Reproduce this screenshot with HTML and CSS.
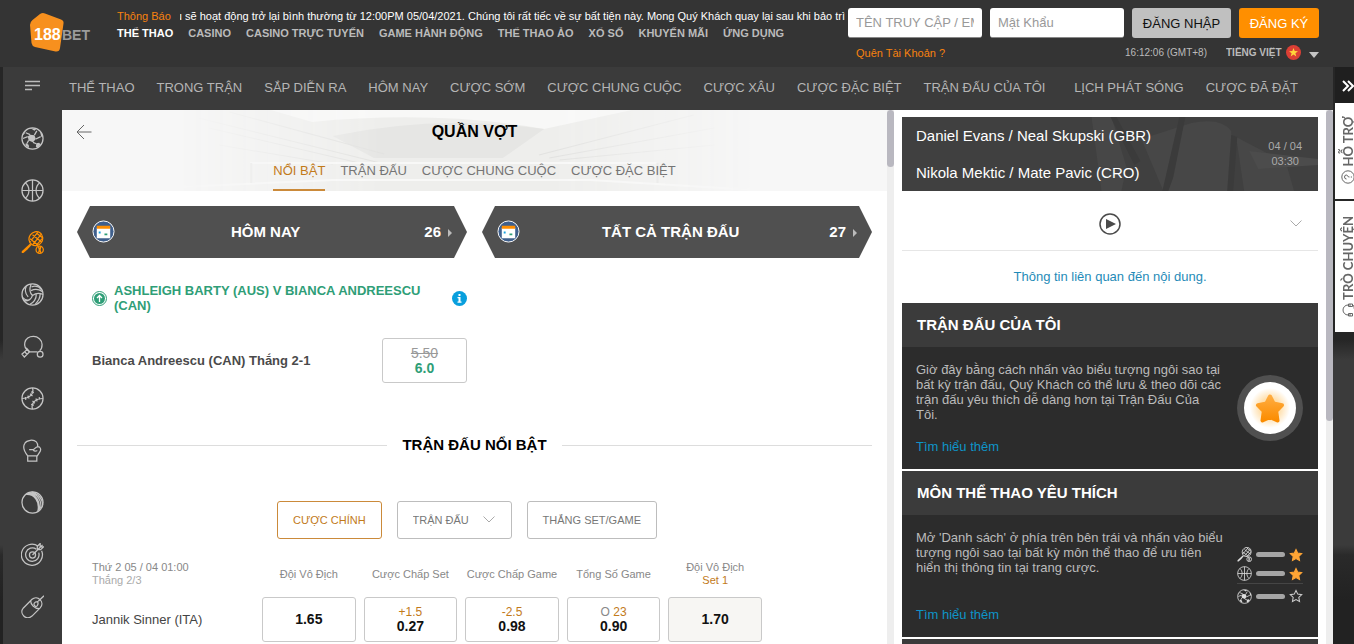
FILE: index.html
```html
<!DOCTYPE html>
<html lang="vi">

<head>
    <meta charset="UTF-8">
    <meta name="viewport" content="width=device-width, initial-scale=1.0">
    <title>188BET - Quần vợt</title>
    <link rel="stylesheet" href="styles.css">
</head>

<body>

    <!-- Biểu tượng dùng chung -->
    <svg class="sprite" aria-hidden="true">
        <symbol id="i-soccer" viewBox="0 0 24 24">
            <circle cx="12" cy="12" r="11" />
            <path class="patch" d="M9.500 8l4.500.5 1.500 4-3 3.500-4.500-2-1-4zM10 1.300l6 .7-2 2zM1.500 9.500L4 6.500l1.500-3L2.500 7zM20 5l1 5 1.800 1-.8-4zM5 17l3 1.500.5 3.500-4-3zM16 17l3-.5 1.500 2-3 3-2-1z" />
            <path d="M9.500 8L5 6M14 8.500L16.500 4M15.500 12.500l5-2.500M12.500 16l3.500 1.500M8 14l-2 3.500M7 10l-5 2" />
        </symbol>
        <symbol id="i-basket" viewBox="0 0 24 24">
            <circle cx="12" cy="12" r="11" />
            <path d="M12 1v22M1 12h22M4.500 4c5 4 5 12 0 16M19.500 4c-5 4-5 12 0 16" />
        </symbol>
        <symbol id="i-tennis" viewBox="0 0 24 24">
            <ellipse cx="15.500" cy="8" rx="7" ry="7.500" transform="rotate(35 15.500 8)" />
            <path d="M9.500 8l8 6.500M12 4l9.500 7.500M16 2l6.500 5M9.500 11l8-9.500M12 14.500L21.500 3M16 15l6-7" />
            <path class="patch" d="M9.500 13l1.500 1.500-4 4.500-4.500 4H.8V21z" />
            <circle cx="19.500" cy="19.500" r="3.800" />
            <path d="M18.200 16.200c1 2 1 5 0 6.600M20.800 16.200c-1 2-1 5 0 6.600" />
        </symbol>
        <symbol id="i-volley" viewBox="0 0 24 24">
            <circle cx="12" cy="12" r="11" />
            <path d="M12 13C9 10 9 5 10.500 1.200M12 13c4-3 8-2.500 11-1M12 13c-1 4-5 6.500-9 5.500M7.500 14.500C4 11 4 6 5.500 3.500M10 16.500c-3 3-6 1-8.500-1.500M11 4c4-1.500 8 0 10.500 3M10.500 8c4-2 8-1.500 12 1M16 11.500c0 5-3 9-7 11M20 11.500c0 4-2 7.500-5 10.500" />
        </symbol>
        <symbol id="i-pingpong" viewBox="0 0 24 24">
            <path d="M17 17.500H8.500C5 15 3 12 4 8c1-4 4.500-6.500 9-6.500S22 5 22 10c0 3-.5 5-2.500 6.500M5.500 13.500L9.500 18M6.500 15L1 20l2.500 3L9 17.500M4 17.500l2.500 3" />
            <circle cx="20" cy="20" r="3" />
        </symbol>
        <symbol id="i-baseball" viewBox="0 0 24 24">
            <circle cx="12" cy="12" r="11" />
            <path d="M12 1c2 6-3 11-11 11M12 23c-2-6 3-11 11-11M13.500 6l-3-1M12 9.500L9.500 7M8.500 12L7 9M5 13.500L4.500 10.500M10.500 18l3 1M12 14.500l2.500 2.500M15.500 12l1.500 3M19 10.500l.5 3" />
        </symbol>
        <symbol id="i-boxing" viewBox="0 0 24 24">
            <path d="M7 17.500c-4-5-5-10-3-13 2-3.500 9-4.500 12-1.500 1.500 1.500 1.500 3 1.500 5 3 0 3.500 3 2.500 5l-3 4.500zM7 17.500h9.500V23H7zM8.500 11h4c2 0 2-2.500 5-3M12.500 11c1 1.500 3 2 4.500 1" />
        </symbol>
        <symbol id="i-cricket" viewBox="0 0 24 24">
            <circle cx="12" cy="12" r="11" />
            <path d="M5.500 3.500C14 3 20 11 17.500 21.500M8.500 2c8 0 13.500 8 12 16M7 2.500c8 0 13.500 8 12 17.500M11 1.200c7 1 12 8 11.500 13.500" />
        </symbol>
        <symbol id="i-darts" viewBox="0 0 24 24">
            <path d="M18 3.500A11 11 0 1 0 21.500 8M16 6.500A7 7 0 1 0 18.500 10" />
            <circle cx="12" cy="12.500" r="3.200" />
            <path d="M12 12.500L20 4.500M17 7V3.500l3-3v3.500h3.500l-3 3zM18.500 6l4-4" />
        </symbol>
        <symbol id="i-esports" viewBox="0 0 24 24">
            <path d="M2.500 13.500l9-9c5.500-5 14 3 8.500 9l-8.500 8.500c-6 5-14-2.500-9-8.500zM10 5.800c0 4 4 8.500 9 8.500M18 6.500L24 .8" />
            <path d="M17.500 7c-4 0-5 3-3 4.500s4-1.500 3-4.500z" />
        </symbol>
        <symbol id="i-star" viewBox="0 0 24 24">
            <path d="M12 2.500l3 6.300 6.800.9-5 4.800 1.300 6.900L12 18.100l-6.100 3.300 1.300-6.900-5-4.800 6.800-.9z" />
        </symbol>
        <symbol id="i-chevron" viewBox="0 0 12 7">
            <path d="M.5.5L6 6 11.500.5" />
        </symbol>
        <symbol id="i-calendar" viewBox="0 0 24 24">
            <circle cx="12" cy="12" r="11" fill="#3f5f8c" stroke="#fff" />
            <path fill="#fff" d="M5 8h14v11H5z" />
            <path fill="#ff8e00" d="M5 6h14v3H5z" />
            <path fill="#1ba3e0" d="M7 12h2v2H7z" />
            <path fill="#2f9e77" d="M13 14h3v2h-3z" />
        </symbol>
    </svg>

    <header class="topbar">
        <a class="logo" href="#" aria-label="188BET">
            <svg width="66" height="44" viewBox="0 0 66 44">
                <path fill="#f7901e" d="M12 2Q14.500.5 17 1.500l16 6q3 1 2.500 4L32 36q-.5 4-4.500 3.500L7 35q-3-1-3.500-4L2 13q0-3 2.500-5z" />
                <text class="logo-num" x="6" y="28">188</text>
                <text class="logo-bet" x="34" y="28">BET</text>
            </svg>
        </a>

        <div class="top-main">
            <div class="notice">
                <span class="notice-label">Thông Báo</span>
                <div class="notice-window">
                    <p class="notice-text">u sẽ hoạt động trở lại bình thường từ 12:00PM 05/04/2021. Chúng tôi rất tiếc về sự bất tiện này. Mong Quý Khách quay lại sau khi bảo trì hoàn tất.</p>
                </div>
            </div>
            <nav class="top-menu">
                <a class="active" href="#">THỂ THAO</a>
                <a href="#">CASINO</a>
                <a href="#">CASINO TRỰC TUYẾN</a>
                <a href="#">GAME HÀNH ĐỘNG</a>
                <a href="#">THỂ THAO ẢO</a>
                <a href="#">XỔ SỐ</a>
                <a href="#">KHUYẾN MÃI</a>
                <a href="#">ỨNG DỤNG</a>
            </nav>
        </div>

        <form class="login">
            <div class="login-row">
                <input type="text" aria-label="Tên truy cập" placeholder="TÊN TRUY CẬP / EMAIL">
                <input type="password" aria-label="Mật khẩu" placeholder="Mật Khẩu">
                <button class="btn-login" type="button">ĐĂNG NHẬP</button>
                <button class="btn-register" type="button">ĐĂNG KÝ</button>
            </div>
            <div class="login-info">
                <a class="forgot" href="#">Quên Tài Khoản ?</a>
                <span class="clock">16:12:06 (GMT+8)</span>
                <label class="language">
                    <select aria-label="Ngôn ngữ">
                        <option>TIẾNG VIỆT</option>
                    </select>
                    <svg width="15" height="15" viewBox="0 0 15 15">
                        <circle cx="7.500" cy="7.500" r="7.500" fill="#dc3f35" />
                        <path fill="#ffd43b" d="M7.500 3l1.200 3.100 3.300.1-2.600 2 .9 3.200-2.800-1.800-2.800 1.800.9-3.200-2.600-2 3.300-.1z" />
                    </svg>
                    <svg width="10" height="6" viewBox="0 0 10 6">
                        <path fill="#c4c4c4" d="M0 0h10L5 6z" />
                    </svg>
                </label>
            </div>
        </form>
    </header>

    <div class="page">
        <div class="app">
            <nav class="sport-nav">
                <button class="menu-btn" type="button" aria-label="Danh sách">
                    <svg width="15" height="12" viewBox="0 0 15 12">
                        <path d="M0 1.500h15M0 5.500h15M0 9.500h7" />
                    </svg>
                </button>
                <a href="#">THỂ THAO</a>
                <a href="#">TRONG TRẬN</a>
                <a href="#">SẮP DIỄN RA</a>
                <a href="#">HÔM NAY</a>
                <a href="#">CƯỢC SỚM</a>
                <a href="#">CƯỢC CHUNG CUỘC</a>
                <a href="#">CƯỢC XÂU</a>
                <a href="#">CƯỢC ĐẶC BIỆT</a>
                <a href="#">TRẬN ĐẤU CỦA TÔI</a>
                <a class="push" href="#">LỊCH PHÁT SÓNG</a>
                <a href="#">CƯỢC ĐÃ ĐẶT</a>
            </nav>

            <div class="columns">
                <nav class="sidebar">
                    <a href="#" aria-label="Bóng đá"><svg class="icon"><use href="#i-soccer" /></svg></a>
                    <a href="#" aria-label="Bóng rổ"><svg class="icon"><use href="#i-basket" /></svg></a>
                    <a class="active" href="#" aria-label="Quần vợt"><svg class="icon"><use href="#i-tennis" /></svg></a>
                    <a href="#" aria-label="Bóng chuyền"><svg class="icon"><use href="#i-volley" /></svg></a>
                    <a href="#" aria-label="Bóng bàn"><svg class="icon"><use href="#i-pingpong" /></svg></a>
                    <a href="#" aria-label="Bóng chày"><svg class="icon"><use href="#i-baseball" /></svg></a>
                    <a href="#" aria-label="Quyền anh"><svg class="icon"><use href="#i-boxing" /></svg></a>
                    <a href="#" aria-label="Cricket"><svg class="icon"><use href="#i-cricket" /></svg></a>
                    <a href="#" aria-label="Phi tiêu"><svg class="icon"><use href="#i-darts" /></svg></a>
                    <a href="#" aria-label="Thể thao điện tử"><svg class="icon"><use href="#i-esports" /></svg></a>
                </nav>

                <main class="content">
                    <div class="sport-header">
                        <!-- Sân vận động mờ phía sau tiêu đề -->
                        <svg class="stadium" viewBox="0 0 560 81" preserveAspectRatio="none" aria-hidden="true">
                            <defs>
                                <linearGradient id="fade">
                                    <stop offset="0" stop-color="#fff" stop-opacity="0" />
                                    <stop offset=".35" stop-color="#fff" />
                                    <stop offset=".65" stop-color="#fff" />
                                    <stop offset="1" stop-color="#fff" stop-opacity="0" />
                                </linearGradient>
                                <mask id="fadeMask">
                                    <path fill="url(#fade)" d="M0 0h560v81H0z" />
                                </mask>
                            </defs>
                            <g mask="url(#fadeMask)">
                                <path fill="#eeeeec" d="M0 0h560v81H0z" />
                                <path fill="#f8f8f7" d="M90 0h350l-85 19Q250 0 130 12z" />
                                <path fill="#e6e6e4" d="M150 26q100-22 205-7l-40 29H190z" />
                                <path fill="none" stroke="#e2e2e0" d="M20 8l180 46M30 18l150 36M50 2l150 42M350 45l150-40M360 48l160-30M370 50l150-15M40 35l110 19" />
                                <path fill="none" stroke="#f8f8f7" stroke-width="2" d="M70 53h394M0 77l150-7h250l160 10" />
                                <path fill="none" stroke="#e0e0de" stroke-width="2" d="M71 53v20M465 53v20" />
                            </g>
                        </svg>
                        <button class="back" type="button" aria-label="Quay lại">
                            <svg width="16" height="16" viewBox="0 0 16 16">
                                <path d="M15.500 8H1M8 1L1 8l7 7" />
                            </svg>
                        </button>
                        <h1>QUẦN VỢT</h1>
                        <nav class="tabs">
                            <a class="active" href="#">NỔI BẬT</a>
                            <a href="#">TRẬN ĐẤU</a>
                            <a href="#">CƯỢC CHUNG CUỘC</a>
                            <a href="#">CƯỢC ĐẶC BIỆT</a>
                        </nav>
                    </div>

                    <div class="two-col">
                        <a class="hex" href="#">
                            <svg class="hex-icon"><use href="#i-calendar" /></svg>
                            <span class="hex-title">HÔM NAY</span>
                            <span class="hex-count">26</span>
                        </a>
                        <a class="hex" href="#">
                            <svg class="hex-icon"><use href="#i-calendar" /></svg>
                            <span class="hex-title">TẤT CẢ TRẬN ĐẤU</span>
                            <span class="hex-count">27</span>
                        </a>
                    </div>

                    <div class="two-col">
                        <section class="boost">
                            <div class="boost-head">
                                <svg width="15" height="15" viewBox="0 0 15 15">
                                    <circle cx="7.500" cy="7.500" r="7" fill="none" stroke="#2f9e77" />
                                    <circle cx="7.500" cy="7.500" r="5.500" fill="#2f9e77" />
                                    <path fill="none" stroke="#fff" stroke-width="1.300" d="M7.500 11V4.500M5 7l2.500-2.500L10 7" />
                                </svg>
                                <h2>ASHLEIGH BARTY (AUS) V BIANCA ANDREESCU (CAN)</h2>
                                <svg width="15" height="15" viewBox="0 0 15 15">
                                    <circle cx="7.500" cy="7.500" r="7.500" fill="#099fdd" />
                                    <path fill="#fff" d="M6.500 3h2v2h-2zM5.500 6h3v4.500h1v1.200h-4v-1.200h1V7.200h-1z" />
                                </svg>
                            </div>
                            <div class="boost-bet">
                                <span>Bianca Andreescu (CAN) Thắng 2-1</span>
                                <button class="odds" type="button">
                                    <s>5.50</s>
                                    <b>6.0</b>
                                </button>
                            </div>
                        </section>
                    </div>

                    <h2 class="divider">TRẬN ĐẤU NỔI BẬT</h2>

                    <div class="filters">
                        <button class="filter active" type="button">CƯỢC CHÍNH</button>
                        <div class="filter-select">
                            <select class="filter" aria-label="Trận đấu">
                                <option>TRẬN ĐẤU</option>
                            </select>
                            <svg class="chevron"><use href="#i-chevron" /></svg>
                        </div>
                        <button class="filter" type="button">THẮNG SET/GAME</button>
                    </div>

                    <table class="odds-table">
                        <thead>
                            <tr>
                                <th class="match-time" scope="col">Thứ 2 05 / 04 01:00<small>Thắng 2/3</small></th>
                                <th scope="col">Đội Vô Địch</th>
                                <th scope="col">Cược Chấp Set</th>
                                <th scope="col">Cược Chấp Game</th>
                                <th scope="col">Tổng Số Game</th>
                                <th scope="col">Đội Vô Địch<em>Set 1</em></th>
                            </tr>
                        </thead>
                        <tbody>
                            <tr>
                                <th class="player" scope="row">Jannik Sinner (ITA)</th>
                                <td><button class="odds" type="button"><b>1.65</b></button></td>
                                <td><button class="odds" type="button"><em>+1.5</em><b>0.27</b></button></td>
                                <td><button class="odds" type="button"><em>-2.5</em><b>0.98</b></button></td>
                                <td><button class="odds" type="button"><em><i>O</i> 23</em><b>0.90</b></button></td>
                                <td><button class="odds shaded" type="button"><b>1.70</b></button></td>
                            </tr>
                        </tbody>
                    </table>
                </main>

                <div class="track">
                    <div class="thumb thumb-short"></div>
                </div>

                <aside class="info">
                    <div class="match">
                        <svg class="match-bg" viewBox="0 0 417 74" preserveAspectRatio="none" aria-hidden="true">
                            <path fill="#474747" d="M190 0l20 0 15 50-5 24h-20zM240 22l50-16q30-6 40 8l2 60h-70zM335 20l50 26 8 28h-50z" />
                            <path fill="#3b3b3b" d="M278 0h6l-12 60-5 14h-6zM330 18l6 2-4 54h-6zM215 0l24 44-6 4-24-48z" />
                            <path fill="#4c4c4c" d="M348 34l69 8v6l-60 4z" />
                        </svg>
                        <div class="match-teams">
                            <p>Daniel Evans / Neal Skupski (GBR)</p>
                            <p>Nikola Mektic / Mate Pavic (CRO)</p>
                        </div>
                        <time class="match-date">04 / 04<br>03:30</time>
                    </div>
                    <div class="player-bar">
                        <button class="play" type="button" aria-label="Phát">
                            <svg width="22" height="22" viewBox="0 0 22 22">
                                <circle cx="11" cy="11" r="10" />
                                <path class="solid" d="M7 6l10 5-10 5z" />
                            </svg>
                        </button>
                        <svg class="chevron"><use href="#i-chevron" /></svg>
                    </div>
                    <a class="related" href="#">Thông tin liên quan đến nội dung.</a>

                    <section class="card">
                        <h2>TRẬN ĐẤU CỦA TÔI</h2>
                        <div class="card-body">
                            <div class="card-text">
                                <p>Giờ đây bằng cách nhấn vào biểu tượng ngôi sao tại bất kỳ trận đấu, Quý Khách có thể lưu &amp; theo dõi các trận đấu yêu thích dễ dàng hơn tại Trận Đấu Của Tôi.</p>
                                <a href="#">Tìm hiểu thêm</a>
                            </div>
                            <svg class="card-art" viewBox="0 0 66 66">
                                <defs>
                                    <radialGradient id="glow">
                                        <stop offset=".5" stop-color="#ffe0ae" />
                                        <stop offset="1" stop-color="#fff" />
                                    </radialGradient>
                                    <linearGradient id="gold" x2="0" y2="1">
                                        <stop offset="0" stop-color="#ffac3f" />
                                        <stop offset="1" stop-color="#fb8c00" />
                                    </linearGradient>
                                </defs>
                                <circle cx="33" cy="33" r="33" fill="#505050" />
                                <circle cx="33" cy="33" r="26" fill="#fff" />
                                <circle cx="33" cy="33" r="20" fill="url(#glow)" />
                                <path fill="url(#gold)" stroke="url(#gold)" stroke-width="4" stroke-linejoin="round" d="M33 21.500l3.600 7 8.400 1.700-5.800 6 1.300 9.300-7.500-3.500-7.500 3.500 1.300-9.300-5.800-6 8.400-1.700z" />
                            </svg>
                        </div>
                    </section>

                    <section class="card">
                        <h2>MÔN THỂ THAO YÊU THÍCH</h2>
                        <div class="card-body">
                            <div class="card-text">
                                <p>Mở 'Danh sách' ở phía trên bên trái và nhấn vào biểu tượng ngôi sao tại bất kỳ môn thể thao để ưu tiên hiển thị thông tin tại trang cược.</p>
                                <a href="#">Tìm hiểu thêm</a>
                            </div>
                            <ul class="fav-list">
                                <li><svg class="icon"><use href="#i-tennis" /></svg><span class="bar"></span><svg class="star on"><use href="#i-star" /></svg></li>
                                <li><svg class="icon"><use href="#i-basket" /></svg><span class="bar"></span><svg class="star on"><use href="#i-star" /></svg></li>
                                <li><svg class="icon"><use href="#i-soccer" /></svg><span class="bar"></span><svg class="star"><use href="#i-star" /></svg></li>
                            </ul>
                        </div>
                    </section>

                    <section class="card next"></section>
                </aside>

                <div class="track">
                    <div class="thumb thumb-long"></div>
                </div>
            </div>
        </div>

        <!-- Thanh hỗ trợ bên phải -->
        <div class="rail">
            <button class="rail-toggle" type="button" aria-label="Thu gọn">
                <svg width="12" height="12" viewBox="0 0 12 12">
                    <path d="M1 1l5 5-5 5M6 1l5 5-5 5" />
                </svg>
            </button>
            <a class="rail-tab" href="#">
                <span>HỖ TRỢ</span>
                <svg width="14" height="14" viewBox="0 0 14 14">
                    <circle cx="7" cy="7" r="6.200" />
                    <path d="M5 5.500Q5 3.500 7 3.500t2 1.800Q9 6.500 7 7.500v1M7 9.800v1.200" transform="rotate(-90 7 7)" />
                </svg>
            </a>
            <a class="rail-tab tall" href="#">
                <span>TRÒ CHUYỆN</span>
                <svg width="14" height="14" viewBox="0 0 14 14">
                    <path d="M2 10V7a5 5 0 0 1 10 0v3M1 7.500h2.500v4H1zM10.500 7.500H13v4h-2.500zM12 11.500q0 2-4 1.800" transform="rotate(-90 7 7)" />
                </svg>
            </a>
        </div>
    </div>

</body>

</html>
```

FILE: styles.css
```css
* {
    box-sizing: border-box;
}

body {
    margin: 0;
    height: 100vh;
    display: flex;
    flex-direction: column;
    overflow: hidden;
    font-family: "Liberation Sans", Arial, sans-serif;
    font-size: 13px;
    color: #333;
    background: linear-gradient(#262626 0, #262626 340px, #3b3b3b 360px, #3b3b3b 545px, #2a2a2a 555px, #222 600px);
}

a {
    text-decoration: none;
    color: inherit;
}

h1,
h2,
p,
ul {
    margin: 0;
    padding: 0;
}

em,
i {
    font-style: normal;
}

button,
input,
select {
    font: inherit;
    margin: 0;
    padding: 0;
    border: none;
    background: none;
}

button {
    cursor: pointer;
}

select {
    appearance: none;
    cursor: pointer;
}

.sprite {
    position: absolute;
    width: 0;
    height: 0;
}

.icon {
    width: 23px;
    height: 23px;
    fill: none;
    stroke: currentColor;
    stroke-width: 1.3;
}

.solid {
    fill: currentColor;
}

.patch {
    fill: currentColor;
    stroke: none;
}

/* thanh trên cùng */
.topbar {
    flex: none;
    display: flex;
    height: 67px;
    padding: 8px 35px 0 28px;
    background-color: #343434;
    color: #bbb;
}

.logo {
    flex: none;
    width: 89px;
    padding-top: 4px;
}

.logo-num,
.logo-bet {
    font-size: 16px;
    font-weight: bold;
    fill: #fff;
}

.logo-bet {
    font-size: 14px;
    fill: #9b9b9b;
}

.top-main {
    flex: 1;
    min-width: 0;
    padding-right: 3px;
    font-size: 11px;
    line-height: 16px;
}

.notice {
    display: flex;
    gap: 9px;
}

.notice-label {
    flex: none;
    color: #f7820f;
}

.notice-window {
    overflow: hidden;
    color: #fff;
}

.notice-text {
    margin-left: -4px;
    white-space: nowrap;
}

.top-menu {
    display: flex;
    gap: 15px;
    margin-top: 1px;
    font-weight: bold;
    white-space: nowrap;
}

.top-menu .active {
    color: #fff;
}

.login {
    flex: none;
}

.login-row {
    display: flex;
    gap: 8px;
}

.login-row input {
    width: 134px;
    height: 30px;
    padding: 0 8px;
    border-bottom: 1px solid #888;
    border-radius: 3px;
    background-color: #fff;
}

.login-row input::placeholder {
    color: #999;
}

.btn-login,
.btn-register {
    height: 30px;
    border-radius: 3px;
}

.btn-login {
    width: 99px;
    background-color: #c0c0c0;
    color: #111;
}

.btn-register {
    width: 80px;
    background-color: #ff8f00;
    color: #fff;
}

.login-info {
    display: flex;
    align-items: center;
    margin-top: 7px;
    padding-left: 8px;
    font-size: 10px;
}

.forgot {
    margin-right: auto;
    font-size: 11px;
    color: #f7820f;
}

.language {
    display: flex;
    align-items: center;
    gap: 4px;
    margin-left: 19px;
}

.language select {
    font-weight: bold;
    color: #bbb;
}

.language svg:last-child {
    margin: 4px 0 0 4px;
}

/* khung chính */
.page {
    flex: 1;
    min-height: 0;
    display: flex;
    padding-left: 3px;
}

.app {
    flex: 1;
    min-width: 0;
    display: flex;
    flex-direction: column;
    background-color: #3b3b3b;
}

.sport-nav {
    flex: none;
    display: flex;
    align-items: center;
    gap: 22px;
    height: 43px;
    padding: 0 35px 3px 0;
    color: #b5b5b5;
    white-space: nowrap;
}

.sport-nav .push {
    margin-left: auto;
}

.menu-btn {
    width: 59px;
    margin-right: -15px;
    line-height: 1;
}

.menu-btn path {
    fill: none;
    stroke: #bbb;
    stroke-width: 1.5;
}

.columns {
    flex: 1;
    min-height: 0;
    display: flex;
    background-color: #fff;
}

.sidebar {
    flex: none;
    width: 59px;
    padding-top: 2px;
    overflow: hidden;
    background-color: #3b3b3b;
    color: #c4c4c4;
}

.sidebar a {
    display: flex;
    height: 52px;
    align-items: center;
    justify-content: center;
}

.sidebar .active {
    color: #ff8f00;
}

.track {
    flex: none;
    width: 7px;
    background-color: #eee;
}

.thumb {
    border-radius: 4px;
    background-color: #b9b8c0;
}

.thumb-short {
    height: 57px;
}

.thumb-long {
    height: 311px;
}

/* nội dung giữa */
.content {
    flex: 1;
    min-width: 0;
    overflow: hidden;
}

.sport-header {
    position: relative;
    background-color: #f7f7f7;
    text-align: center;
}

.stadium {
    position: absolute;
    top: 0;
    left: 14%;
    width: 70%;
    height: 100%;
}

.back {
    position: absolute;
    top: 14px;
    left: 14px;
    height: 16px;
}

.back path {
    fill: none;
    stroke: #666;
}

.sport-header h1 {
    position: relative;
    font-size: 16px;
    line-height: 43px;
    color: #000;
}

.tabs {
    position: relative;
    display: flex;
    justify-content: center;
    gap: 15px;
    line-height: 36px;
    color: #757575;
}

.tabs a {
    border-bottom: 2px solid transparent;
}

.tabs .active {
    color: #c27a1a;
    border-color: #cb8a3a;
}

.two-col {
    display: grid;
    grid-template-columns: 1fr 1fr;
    gap: 15px;
    padding: 15px 15px 0;
}

.hex {
    display: flex;
    align-items: center;
    height: 52px;
    padding: 0 15px 2px;
    background-color: #505050;
    clip-path: polygon(0 50%, 13px 0, calc(100% - 13px) 0, 100% 50%, calc(100% - 13px) 100%, 13px 100%);
    color: #fff;
    font-size: 15px;
    font-weight: bold;
}

.hex-icon {
    width: 23px;
    height: 23px;
}

.hex-title {
    flex: 1;
    padding-right: 8px;
    text-align: center;
}

.hex-count::after {
    content: "";
    display: inline-block;
    margin-left: 7px;
    border: 4px solid transparent;
    border-left-color: #bbb;
    border-right: none;
}

.boost {
    padding: 10px 0 0 15px;
}

.boost-head {
    display: flex;
    align-items: center;
    gap: 7px;
}

.boost-head svg {
    flex: none;
}

.boost-head h2 {
    flex: 1;
    font-size: 13px;
    line-height: 15px;
    color: #2f9e77;
}

.boost-bet {
    display: flex;
    align-items: center;
    justify-content: space-between;
    margin-top: 25px;
    font-weight: bold;
    color: #4a4a4a;
}

.odds {
    width: 100%;
    height: 45px;
    border: 1px solid #c9c9c9;
    border-radius: 3px;
    background-color: #fff;
    font-size: 14px;
    line-height: 15px;
    color: #111;
}

.odds b,
.odds s,
.odds em {
    display: block;
}

.odds em {
    font-size: 12px;
    line-height: 14px;
    color: #c27a1a;
}

.odds i {
    color: #888;
}

.odds.shaded {
    background-color: #f7f6f3;
}

.boost-bet .odds {
    width: 85px;
}

.boost-bet s {
    font-weight: normal;
    color: #999;
}

.boost-bet b {
    color: #2f9e77;
}

.divider {
    display: flex;
    align-items: center;
    gap: 15px;
    margin: 52px 15px 0;
    font-size: 15px;
    line-height: 20px;
    color: #000;
}

.divider::before,
.divider::after {
    content: "";
    flex: 1;
    height: 1px;
    background-color: #ddd;
}

.filters {
    display: flex;
    justify-content: center;
    gap: 15px;
    margin: 46px 15px 0;
    padding-right: 15px;
    font-size: 11px;
}

.filter {
    height: 38px;
    padding: 0 15px;
    border: 1px solid #bdbdbd;
    border-radius: 3px;
    background-color: #fff;
    color: #777;
}

.filter.active {
    border-color: #cb8a3a;
    color: #c27a1a;
}

.filter-select {
    position: relative;
}

.filter-select .filter {
    padding-right: 41px;
}

.chevron {
    width: 12px;
    height: 7px;
    fill: none;
    stroke: #aaa;
}

.filter-select .chevron {
    position: absolute;
    top: 15px;
    right: 17px;
    pointer-events: none;
}

.odds-table {
    width: calc(100% - 151px);
    margin: 16px 0 0 30px;
    table-layout: fixed;
    border-collapse: collapse;
    text-align: center;
}

.odds-table th {
    padding: 0;
    font-weight: normal;
}

.odds-table thead th {
    height: 42px;
    padding-bottom: 4px;
    font-size: 11px;
    line-height: 13px;
    white-space: nowrap;
    color: #888;
}

.odds-table td {
    padding: 0 4px;
}

.odds-table small,
.odds-table th em {
    display: block;
    font-size: 11px;
}

.odds-table small {
    color: #aaa;
}

.odds-table th em {
    color: #c27a1a;
}

.odds-table .match-time,
.odds-table .player {
    width: 166px;
    text-align: left;
}

.odds-table .player {
    color: #444;
}

/* cột phải */
.info {
    flex: none;
    width: 432px;
    padding: 7px 8px 0;
    overflow: hidden;
}

.match {
    position: relative;
    display: flex;
    align-items: center;
    justify-content: space-between;
    height: 74px;
    padding: 0 16px 0 14px;
    background-color: #404040;
    color: #fff;
}

.match-bg {
    position: absolute;
    inset: 0;
    width: 100%;
    height: 100%;
}

.match-teams,
.match-date {
    position: relative;
}

.match-teams {
    font-size: 15px;
    line-height: 37px;
}

.match-date {
    font-size: 11px;
    line-height: 15px;
    text-align: center;
    color: #aaa;
}

.player-bar {
    display: grid;
    grid-template-columns: 1fr auto 1fr;
    align-items: center;
    height: 60px;
    padding: 6px 16px 0;
    border-bottom: 1px solid #e6e6e6;
}

.play {
    grid-column: 2;
    height: 22px;
    color: #4a4a4a;
}

.play circle {
    fill: none;
    stroke: #4a4a4a;
    stroke-width: 1.5;
}

.player-bar .chevron {
    justify-self: end;
}

.related {
    display: block;
    line-height: 52px;
    text-align: center;
    color: #1f8bb8;
}

.card {
    margin-bottom: 2px;
    background-color: #2c2c2c;
    color: #bbb;
}

.card h2 {
    padding: 0 15px;
    font-size: 15px;
    line-height: 44px;
    color: #fff;
    background-color: #3b3b3b;
}

.card-body {
    display: flex;
    justify-content: space-between;
    height: 122px;
    padding: 15px 15px 15px 14px;
}

.card-text {
    width: 307px;
    display: flex;
    flex-direction: column;
    line-height: 15px;
}

.card-text a {
    margin-top: auto;
    color: #0e94c8;
}

.card-art {
    width: 66px;
    height: 66px;
    margin-top: 13px;
}

.fav-list {
    flex: none;
    width: 66px;
    padding-top: 15px;
    list-style: none;
}

.fav-list li {
    display: flex;
    align-items: center;
    gap: 4px;
    height: 19px;
}

.fav-list li:last-child {
    height: 25px;
    border-top: 1px solid #454545;
}

.fav-list .icon {
    width: 15px;
    height: 15px;
    color: #ddd;
}

.bar {
    width: 29px;
    height: 5px;
    border-radius: 3px;
    background-color: #a5a5a5;
}

.star {
    width: 14px;
    height: 14px;
    fill: none;
    stroke: #ccc;
    stroke-width: 1.8;
}

.star.on {
    fill: #ffa535;
    stroke: #ffa535;
}

.card.next {
    height: 44px;
    background-color: #3b3b3b;
}

/* thanh bên phải */
.rail {
    flex: none;
    width: 21px;
    padding-left: 2px;
    overflow: hidden;
}

.rail-toggle {
    display: block;
    width: 100%;
    height: 36px;
    padding: 4px 0 0 6px;
    background-color: #1f1f1f;
}

.rail-toggle path {
    fill: none;
    stroke: #fff;
    stroke-width: 2;
}

.rail-tab {
    display: flex;
    flex-direction: column;
    align-items: center;
    justify-content: flex-end;
    gap: 3px;
    width: 26px;
    height: 96px;
    margin-bottom: 2px;
    padding-bottom: 15px;
    background-color: #fff;
    font-family: Lato, sans-serif;
    font-size: 13px;
    font-weight: bold;
    line-height: 16px;
    white-space: nowrap;
    color: #666;
}

.rail-tab.tall {
    height: 131px;
}

.rail-tab span {
    writing-mode: vertical-rl;
    transform: rotate(180deg);
}

.rail-tab svg {
    flex: none;
    fill: none;
    stroke: #666;
}
```
